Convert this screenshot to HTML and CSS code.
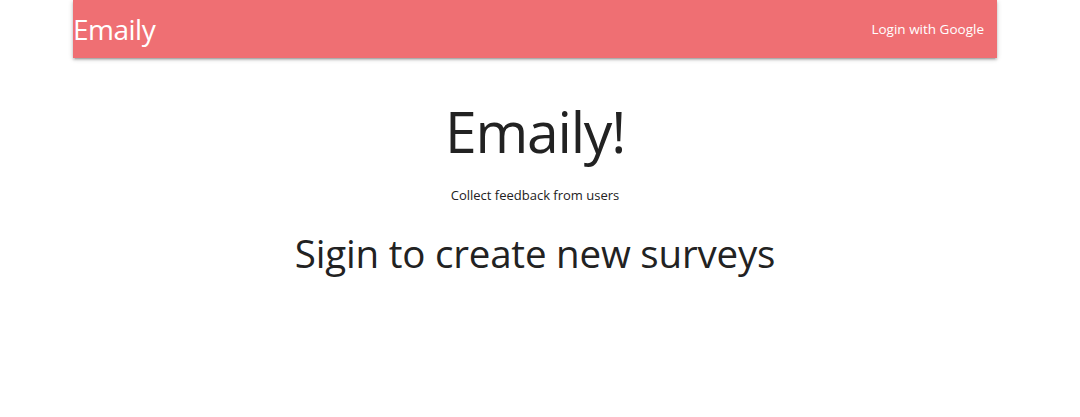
FILE: index.html
```html
<!DOCTYPE html>
<html lang="en">
<head>
<meta charset="utf-8">
<title>Emaily</title>
<link rel="stylesheet" href="styles.css">
</head>
<body>
<div class="container">
  <nav class="navbar">
    <a class="brand" href="#">Emaily</a>
    <ul class="nav-links">
      <li><a href="#">Login with Google</a></li>
    </ul>
  </nav>
  <main class="landing">
    <h1 class="title">Emaily!</h1>
    <p class="subtitle">Collect feedback from users</p>
    <h3 class="cta">Sigin to create new surveys</h3>
  </main>
</div>
</body>
</html>
```
FILE: styles.css
```css
html, body {
  margin: 0;
  padding: 0;
  background: #ffffff;
}
body {
  font-family: "Open Sans", "Noto Sans", sans-serif;
  color: rgba(0, 0, 0, 0.87);
}
.container {
  width: 924px;
  margin-left: 73px;
}
.navbar {
  height: 58px;
  background: #ef6f73;
  display: flex;
  align-items: center;
  justify-content: space-between;
  box-shadow: 0 2px 2px 0 rgba(0,0,0,0.14), 0 3px 1px -2px rgba(0,0,0,0.12), 0 1px 5px 0 rgba(0,0,0,0.2);
}
.brand {
  color: #fff;
  text-decoration: none;
  font-size: 28px;
  letter-spacing: -0.5px;
  line-height: 58px;
}
.nav-links {
  list-style: none;
  margin: 0;
  padding: 0;
  display: flex;
}
.nav-links a {
  color: #fff;
  text-decoration: none;
  font-size: 13.5px;
  padding: 0 13px;
  line-height: 58px;
  display: block;
}
.landing {
  text-align: center;
}
.title {
  margin: 40px 0 0;
  font-weight: 400;
  font-size: 57px;
  letter-spacing: -1.2px;
  line-height: 66px;
  color: #222;
}
.subtitle {
  margin: 20px 0 0;
  font-size: 13px;
  line-height: 22px;
  color: #222;
}
.cta {
  margin: 22px 0 0;
  font-weight: 400;
  font-size: 38.5px;
  letter-spacing: -0.2px;
  line-height: 50px;
  color: #222;
}
```
